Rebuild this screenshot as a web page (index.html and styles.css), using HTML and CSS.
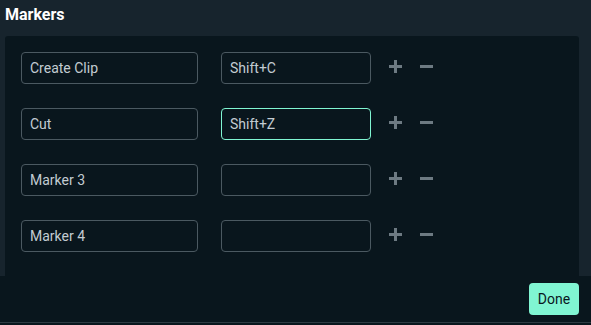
FILE: index.html
```html
<!DOCTYPE html>
<html>
<head>
<meta charset="utf-8">
<link rel="stylesheet" href="styles.css">
</head>
<body>
<div class="modal">
  <h1 class="title">Markers</h1>
  <div class="panel">
    <div class="row">
      <div class="field name">Create Clip</div>
      <div class="field key">Shift+C</div>
      <span class="icon plus"></span>
      <span class="icon minus"></span>
    </div>
    <div class="row">
      <div class="field name">Cut</div>
      <div class="field key focused">Shift+Z</div>
      <span class="icon plus"></span>
      <span class="icon minus"></span>
    </div>
    <div class="row">
      <div class="field name">Marker 3</div>
      <div class="field key"></div>
      <span class="icon plus"></span>
      <span class="icon minus"></span>
    </div>
    <div class="row">
      <div class="field name">Marker 4</div>
      <div class="field key"></div>
      <span class="icon plus"></span>
      <span class="icon minus"></span>
    </div>
  </div>
  <div class="footer">
    <button class="done">Done</button>
  </div>
  <div class="bottom-edge"></div>
</div>
</body>
</html>
```

FILE: styles.css
```css
html, body {
  margin: 0;
  padding: 0;
  background: #17242d;
  font-family: Roboto, "Liberation Sans", sans-serif;
  overflow: hidden;
}
.modal {
  width: 591px;
  height: 325px;
  position: relative;
  display: flex;
  flex-direction: column;
}
.title {
  margin: 0;
  padding: 5px 0 0 5px;
  height: 31px;
  font-size: 16px;
  line-height: 20px;
  font-weight: 700;
  color: #ffffff;
}
.panel {
  margin: 0 12px 0 5px;
  background: #09161d;
  border-radius: 3px 3px 0 0;
  padding: 16px 16px 0 16px;
  flex: 1;
  display: flex;
  flex-direction: column;
  gap: 24px;
}
.row {
  display: flex;
  align-items: center;
  height: 32px;
}
.field {
  box-sizing: border-box;
  height: 32px;
  border: 1px solid #4b5961;
  border-radius: 4px;
  padding: 0 8px;
  font-size: 14px;
  line-height: 30px;
  color: #c3ccd2;
}
.name { width: 177px; margin-right: 23px; }
.key { width: 150px; }
.focused { border-color: #80f5d2; }
.icon {
  position: relative;
  width: 13px;
  height: 13px;
  display: inline-block;
  margin-top: -3px;
}
.plus { margin-left: 18px; }
.minus { margin-left: 18px; }
.icon::before, .icon::after {
  content: "";
  position: absolute;
  background: #6d7a82;
}
.icon::before {
  left: 0; right: 0; top: 5px; height: 3px;
}
.plus::after {
  top: 0; bottom: 0; left: 5px; width: 3px;
}
.minus::after { display: none; }
.footer {
  position: absolute;
  left: 0;
  right: 0;
  top: 276px;
  height: 46px;
  background: #09161d;
  display: flex;
  justify-content: flex-end;
  align-items: center;
  padding-right: 12px;
}
.done {
  width: 50px;
  height: 32px;
  border: none;
  border-radius: 4px;
  background: #80f5d2;
  color: #09161d;
  font-family: Roboto, "Liberation Sans", sans-serif;
  font-size: 14px;
  font-weight: 400;
  padding: 0;
}
.bottom-edge {
  position: absolute;
  left: 0;
  right: 0;
  top: 322px;
  height: 3px;
  background: #09161d;
  border-top: 1px solid #2d3a42;
  box-sizing: border-box;
}
```
